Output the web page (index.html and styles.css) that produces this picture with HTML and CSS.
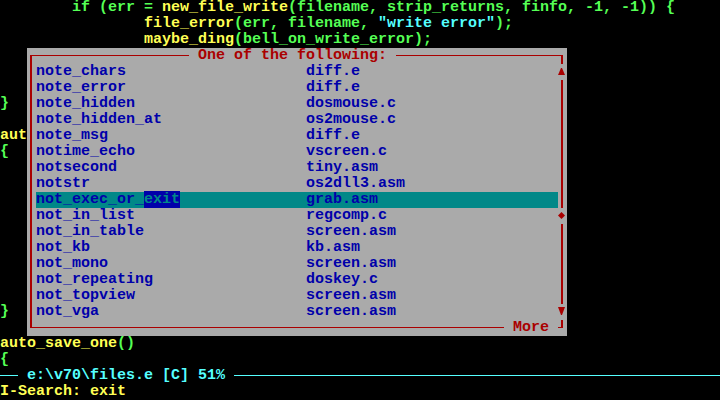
FILE: index.html
```html
<!DOCTYPE html>
<html lang="en">
<head>
    <meta charset="UTF-8">
    <title>files.e - pick a tag</title>
    <link rel="stylesheet" href="styles.css">
</head>
<body>
    <div class="screen">
        <div class="line">        if (err = <span class="fn">new_file_write</span>(filename, strip_returns, finfo, -1, -1)) {</div>
        <div class="line">                <span class="fn">file_error</span>(err, filename, <span class="str">"write error"</span>);</div>
        <div class="line">                <span class="fn">maybe_ding</span>(bell_on_write_error);</div>
        <div class="line"></div>
        <div class="line"></div>
        <div class="line"></div>
        <div class="line">}</div>
        <div class="line"></div>
        <div class="line"><span class="fn">aut</span></div>
        <div class="line">{</div>
        <div class="line"></div>
        <div class="line"></div>
        <div class="line"></div>
        <div class="line"></div>
        <div class="line"></div>
        <div class="line"></div>
        <div class="line"></div>
        <div class="line"></div>
        <div class="line"></div>
        <div class="line">}</div>
        <div class="line"></div>
        <div class="line"><span class="fn">auto_save_one</span>()</div>
        <div class="line">{</div>
        <div class="line status">
            <span class="rule lead"></span>
            <span class="status-text">e:\v70\files.e [C] 51%</span>
            <span class="rule fill"></span>
        </div>
        <div class="line"><span class="fn">I-Search: exit</span></div>

        <!-- tag picker popup -->
        <div class="popup">
            <div class="frame"></div>
            <div class="title"> One of the following: </div>
            <div class="list">
                <div class="item"><span class="name">note_chars</span><span>diff.e</span></div>
                <div class="item"><span class="name">note_error</span><span>diff.e</span></div>
                <div class="item"><span class="name">note_hidden</span><span>dosmouse.c</span></div>
                <div class="item"><span class="name">note_hidden_at</span><span>os2mouse.c</span></div>
                <div class="item"><span class="name">note_msg</span><span>diff.e</span></div>
                <div class="item"><span class="name">notime_echo</span><span>vscreen.c</span></div>
                <div class="item"><span class="name">notsecond</span><span>tiny.asm</span></div>
                <div class="item"><span class="name">notstr</span><span>os2dll3.asm</span></div>
                <div class="item sel"><span class="name">not_exec_or_<span class="hit">exit</span></span><span>grab.asm</span></div>
                <div class="item"><span class="name">not_in_list</span><span>regcomp.c</span></div>
                <div class="item"><span class="name">not_in_table</span><span>screen.asm</span></div>
                <div class="item"><span class="name">not_kb</span><span>kb.asm</span></div>
                <div class="item"><span class="name">not_mono</span><span>screen.asm</span></div>
                <div class="item"><span class="name">not_repeating</span><span>doskey.c</span></div>
                <div class="item"><span class="name">not_topview</span><span>screen.asm</span></div>
                <div class="item"><span class="name">not_vga</span><span>screen.asm</span></div>
            </div>
            <div class="scroll">
                <div class="knob"><svg width="9" height="16" viewBox="0 0 9 16"><polygon points="3,4 4,4 7,11 0,11" /></svg></div>
                <div></div>
                <div class="knob"><svg width="9" height="16" viewBox="0 0 9 16"><polygon points="3.5,4 7,7.5 3.5,11 0,7.5" /></svg></div>
                <div></div>
                <div class="knob"><svg width="9" height="16" viewBox="0 0 9 16"><polygon points="0,3 7,3 4,11 3,11" /></svg></div>
            </div>
            <div class="more"> More </div>
        </div>
    </div>
</body>
</html>
```

FILE: styles.css
```css
* {
    margin: 0;
    padding: 0;
    box-sizing: border-box;
}

body {
    background: #000;
    font-family: "Liberation Mono", "DejaVu Sans Mono", monospace;
    font-size: 15px;
    font-weight: bold;
    line-height: 16px;
}

.screen {
    position: relative;
    width: 720px;
    height: 400px;
    overflow: hidden;
    color: #55ff55;
}

.line {
    height: 16px;
    white-space: pre;
}

.fn {
    color: #ffff55;
}

.str {
    color: #55ffff;
}

/* status line */
.status {
    display: flex;
    color: #55ffff;
}

.rule {
    height: 0;
    margin-top: 7px;
    border-top: 1px solid #55ffff;
}

.rule.lead {
    width: 18px;
}

.rule.fill {
    flex: 1;
}

.status-text {
    padding: 0 9px;
}

/* popup */
.popup {
    position: absolute;
    left: 27px;
    top: 48px;
    width: 540px;
    height: 288px;
    background: #aaaaaa;
    display: grid;
    grid-template-columns: repeat(60, 9px);
    grid-template-rows: repeat(18, 16px);
}

.frame {
    grid-area: 1 / 1 / -1 / -1;
    margin: 7px 4px 8px 3px;
    border: 2px solid #aa0000;
    border-top-width: 1px;
    border-bottom-width: 1px;
}

.title {
    grid-area: 1 / 19 / 2 / 42;
    background: #aaaaaa;
    color: #aa0000;
    white-space: pre;
}

.list {
    grid-area: 2 / 2 / 18 / 60;
    color: #0000aa;
}

.item {
    display: flex;
    height: 16px;
    white-space: pre;
}

.item .name {
    width: 270px;
}

.item.sel {
    background: #008888;
}

.hit {
    background: #0000aa;
    color: #008888;
}

.scroll {
    grid-area: 2 / 60 / 18 / 61;
    display: grid;
    grid-template-rows: 16px 128px 16px 80px 16px;
}

.knob {
    background: #aaaaaa;
}

.knob svg {
    display: block;
    fill: #aa0000;
}

.more {
    grid-area: 18 / 54 / 19 / 60;
    background: #aaaaaa;
    color: #aa0000;
    white-space: pre;
}
```
